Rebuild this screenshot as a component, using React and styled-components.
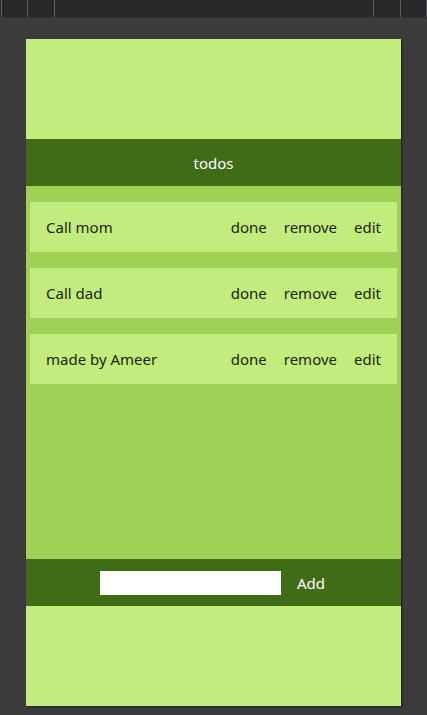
import React, { useState } from "react";
import styled, { createGlobalStyle } from "styled-components";

const GlobalStyle = createGlobalStyle`
  html, body {
    margin: 0;
    padding: 0;
    background: #3c3c3c;
    font-family: "Noto Sans", "Open Sans", sans-serif;
  }
  * {
    box-sizing: border-box;
  }
`;

const Page = styled.div`
  width: 427px;
  height: 715px;
  background: #3c3c3c;
  display: flex;
  flex-direction: column;
  overflow: hidden;
`;

const TopBar = styled.div`
  height: 18px;
  background: #28292b;
  border-bottom: 1px solid #333436;
  display: flex;
  justify-content: space-between;
  padding: 0 0 0 1px;
`;

const TabGroup = styled.div`
  display: flex;
`;

const Tab = styled.div`
  width: ${(p) => p.w}px;
  height: 17px;
  border-left: ${(p) => (p.left ? "1px solid #5c5d60" : "none")};
  border-right: ${(p) => (p.right ? "1px solid #5c5d60" : "none")};
`;

const Phone = styled.div`
  width: 375px;
  height: 667px;
  margin: 21px auto 0;
  background: #c2ec7e;
  display: flex;
  flex-direction: column;
  box-shadow: 1px 1px 2px rgba(0, 0, 0, 0.5);
`;

const Spacer = styled.div`
  height: 100px;
  flex-shrink: 0;
`;

const Bar = styled.div`
  height: 47px;
  flex-shrink: 0;
  background: #406c18;
  color: #fff;
  font-size: 15px;
  display: flex;
  align-items: center;
  justify-content: center;
  gap: 16px;
  padding-right: ${(p) => p.$shift || 0}px;
`;

const Main = styled.div`
  flex: 1;
  background: #9dd055;
  padding: 16px 4px;
  display: flex;
  flex-direction: column;
  gap: 16px;
`;

const Item = styled.div`
  height: 50px;
  background: #c2ec7e;
  display: flex;
  align-items: center;
  padding: 0 16px;
  color: #1c2410;
  font-size: 15px;
`;

const Label = styled.span`
  flex: 1;
`;

const Actions = styled.div`
  display: flex;
  gap: 17px;
`;

const Action = styled.span`
  cursor: pointer;
`;

const Input = styled.input`
  width: 181px;
  height: 24px;
  border: none;
  outline: none;
  background: #fff;
  padding: 0 4px;
  font-family: inherit;
`;

const AddButton = styled.button`
  background: none;
  border: none;
  padding: 0;
  color: #fff;
  font-family: inherit;
  font-size: 15px;
  cursor: pointer;
`;

const initial = ["Call mom", "Call dad", "made by Ameer"];

export default function App() {
  const [todos, setTodos] = useState(initial);
  const [text, setText] = useState("");

  return (
    <Page>
      <GlobalStyle />
      <TopBar>
        <TabGroup>
          <Tab w={26} left />
          <Tab w={28} left right />
        </TabGroup>
        <TabGroup>
          <Tab w={27} left />
          <Tab w={27} left right />
        </TabGroup>
      </TopBar>
      <Phone>
        <Spacer />
        <Bar>todos</Bar>
        <Main>
          {todos.map((t, i) => (
            <Item key={i}>
              <Label>{t}</Label>
              <Actions>
                <Action>done</Action>
                <Action onClick={() => setTodos(todos.filter((_, j) => j !== i))}>
                  remove
                </Action>
                <Action>edit</Action>
              </Actions>
            </Item>
          ))}
        </Main>
        <Bar $shift={2}>
          <Input value={text} onChange={(e) => setText(e.target.value)} />
          <AddButton
            onClick={() => {
              if (text.trim()) setTodos([...todos, text.trim()]);
              setText("");
            }}
          >
            Add
          </AddButton>
        </Bar>
        <Spacer />
      </Phone>
    </Page>
  );
}
